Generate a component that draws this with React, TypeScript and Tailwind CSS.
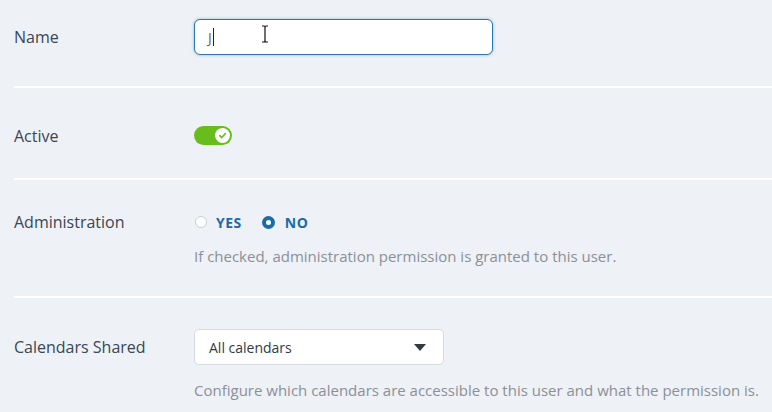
import React from 'react';

const font = { fontFamily: '"Open Sans", "Noto Sans", sans-serif' };

const Divider = () => <div className="ml-[14px] h-[2px] bg-white" />;

const Label: React.FC<{ text: string; h: string }> = ({ text, h }) => (
  <div className={`w-[180px] shrink-0 flex items-center text-[16px] text-[#3b4656] ${h}`}>{text}</div>
);

const Toggle = () => (
  <div className="w-[38px] h-[19px] rounded-full bg-[#68bc1c] flex items-center justify-end pr-[2px]">
    <div className="w-[15px] h-[15px] rounded-full bg-white flex items-center justify-center">
      <svg width="9" height="9" viewBox="0 0 10 10">
        <path d="M2 5.2 L4.2 7.3 L8.2 2.8" fill="none" stroke="#68bc1c" strokeWidth="1.8" strokeLinecap="round" strokeLinejoin="round" />
      </svg>
    </div>
  </div>
);

const App: React.FC = () => {
  return (
    <div className="w-[772px] h-[412px] overflow-hidden bg-[#eef1f5] relative" style={font}>
      {/* Name */}
      <div className="flex pl-[14px] pt-[19px] pb-[31px]">
        <Label text="Name" h="h-[35px]" />
        <div className="relative w-[299px] h-[36px] rounded-[6px] bg-white border border-[#2a78b0] shadow-[0_0_3px_rgba(42,120,176,0.5)] flex items-center pl-[13px]">
          <span className="text-[14px] text-[#6b6250]">J</span>
          <span className="w-px h-[18px] bg-[#222] ml-[1px]" />
        </div>
      </div>
      <Divider />

      {/* Active */}
      <div className="flex pl-[14px] pt-[38px] pb-[33px]">
        <Label text="Active" h="h-[19px]" />
        <Toggle />
      </div>
      <Divider />

      {/* Administration */}
      <div className="flex pl-[14px] pt-[32px] pb-[30px]">
        <Label text="Administration" h="h-[20px]" />
        <div className="flex flex-col">
          <div className="h-[20px] flex items-center">
            <span className="w-[12px] h-[12px] rounded-full bg-white border border-[#c9ced6] ml-[1px]" />
            <span className="ml-[9px] text-[14px] font-bold tracking-[0.5px] text-[#1c6ba6]">YES</span>
            <span className="ml-[20px] w-[13px] h-[13px] rounded-full bg-white border-[4px] border-[#1c6ba6]" />
            <span className="ml-[10px] text-[14px] font-bold tracking-[0.5px] text-[#1c6ba6]">NO</span>
          </div>
          <div className="mt-[14px] text-[15px] leading-[20px] text-[#8b9099]">
            If checked, administration permission is granted to this user.
          </div>
        </div>
      </div>
      <Divider />

      {/* Calendars Shared */}
      <div className="flex pl-[14px] pt-[31px]">
        <Label text="Calendars Shared" h="h-[36px]" />
        <div className="flex flex-col">
          <div className="w-[250px] h-[36px] rounded-[5px] bg-white border border-[#d6dae1] flex items-center justify-between pl-[14px] pr-[17px]">
            <span className="text-[14px] text-[#333a44]">All calendars</span>
            <svg width="12" height="7" viewBox="0 0 12 7">
              <path d="M0 0 L12 0 L6 7 Z" fill="#333a44" />
            </svg>
          </div>
          <div className="mt-[15px] text-[15px] leading-[20px] text-[#8b9099] whitespace-nowrap">
            Configure which calendars are accessible to this user and what the permission is.
          </div>
        </div>
      </div>

      {/* mouse I-beam cursor */}
      <svg className="absolute left-[260px] top-[25px]" width="10" height="18" viewBox="0 0 10 18">
        <path d="M2 1 H4 Q5 1 5 2.5 Q5 1 6 1 H8 M5 2.5 V15.5 M2 17 H4 Q5 17 5 15.5 Q5 17 6 17 H8" fill="none" stroke="#111" strokeWidth="1.2" />
      </svg>
    </div>
  );
};

export default App;
